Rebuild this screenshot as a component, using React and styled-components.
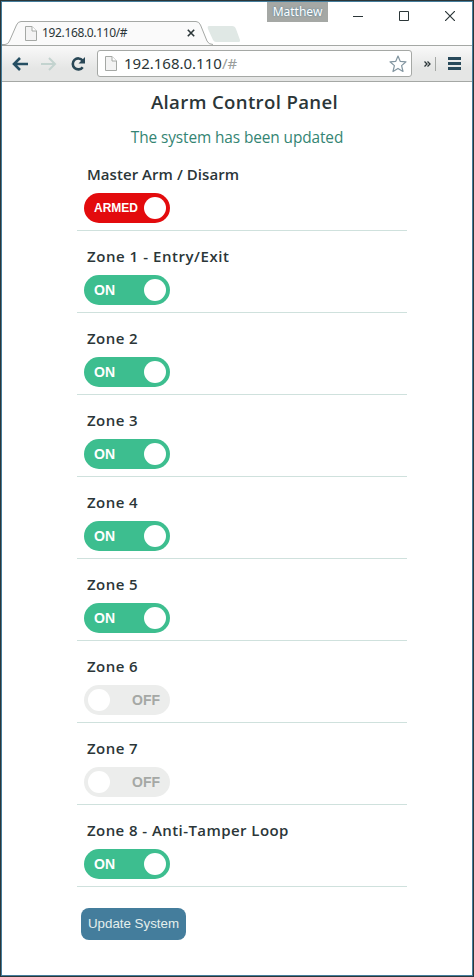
import React from "react";
import styled, { createGlobalStyle } from "styled-components";

const GlobalStyle = createGlobalStyle`
  *, *::before, *::after { box-sizing: border-box; }
  body { margin: 0; background: #fff; }
  svg { display: block; flex: none; }
`;

const BrowserWindow = styled.div`
  width: 474px;
  height: 977px;
  display: flex;
  flex-direction: column;
  overflow: hidden;
  background: #fff;
  border: 1px solid #2b3638;
  outline: 1px solid #447d9c;
  outline-offset: -2px;
  font-family: "Noto Sans", "Open Sans", sans-serif;
`;

const TitleBar = styled.header`
  height: 44px;
  flex: none;
  display: flex;
  justify-content: space-between;
`;

const TabStrip = styled.div`
  display: flex;
  align-items: flex-end;
  height: 45px;
`;

const Tab = styled.div`
  display: grid;
  width: 211px;
  height: 25px;
  margin-left: 1px;
  > * { grid-area: 1 / 1; }
`;

const TabContent = styled.div`
  z-index: 1;
  display: flex;
  align-items: center;
  height: 24px;
  padding: 0 18px 0 23px;
`;

const TabTitle = styled.span`
  flex: 1;
  margin-left: 5px;
  font-size: 12px;
  line-height: 18px;
  letter-spacing: -0.35px;
  color: #2b3638;
`;

const NewTab = styled.div`
  margin: 0 0 4px -6px;
`;

const WindowControls = styled.div`
  display: flex;
  align-items: flex-start;
`;

const UserBadge = styled.div`
  width: 61px;
  height: 20px;
  margin: 1px 25px 0 0;
  background: #a5a8a5;
  color: #fff;
  font-size: 12px;
  line-height: 20px;
  text-align: center;
  text-shadow: 0 0 2px #447d9c;
`;

const ControlIcons = styled.div`
  display: flex;
  gap: 36px;
  padding: 10px 18px 0 0;
`;

const Toolbar = styled.nav`
  height: 37px;
  flex: none;
  display: flex;
  align-items: center;
  border-top: 1px solid #a5a8a5;
  border-bottom: 1px solid #a5a8a5;
  margin: 0 1px;
  padding: 0 11px 0 10px;
  background: linear-gradient(#f9f9f9, #e5e6e5 65%);
`;

const NavIcons = styled.div`
  display: flex;
  align-items: center;
  gap: 13px;
`;

const AddressBar = styled.div`
  display: flex;
  align-items: center;
  width: 315px;
  height: 27px;
  margin-left: 11px;
  padding: 0 4px 0 7px;
  background: #fff;
  border: 1px solid #a5a8a5;
  border-radius: 3px;
`;

const Address = styled.span`
  flex: 1;
  margin: 0 0 2px 7px;
  font-size: 15px;
  line-height: 24px;
  color: #2b3638;
`;

const Fragment = styled.span`
  color: #999d9b;
`;

const ToolbarEnd = styled.div`
  display: flex;
  align-items: center;
  margin-left: auto;
`;

const Divider = styled.div`
  width: 1px;
  height: 14px;
  margin: 0 12px 0 4px;
  background: #a5a8a5;
`;

const Page = styled.main`
  flex: 1;
  display: flex;
  flex-direction: column;
  padding: 0 66px 0 76px;
  font-family: "Open Sans", sans-serif;
  color: #2b3638;
`;

const Heading = styled.h1`
  margin: 6px 0 0 5px;
  font-size: 18.6px;
  font-weight: 600;
  line-height: 28px;
  text-align: center;
  letter-spacing: 0.35px;
  white-space: nowrap;
`;

const Status = styled.p`
  margin: 10px 10px 0 0;
  font-size: 15.4px;
  line-height: 24px;
  text-align: center;
  letter-spacing: -0.1px;
  color: #348573;
  white-space: nowrap;
`;

const ZoneRow = styled.section`
  height: 82px;
  flex: none;
  display: flex;
  flex-direction: column;
  align-items: flex-start;
  padding: 14px 0 0 7px;
  border-bottom: 1px solid #cfe1dd;

  &:first-of-type {
    height: 81px;
    padding-top: 13px;
  }
`;

const ZoneName = styled.h2`
  margin: 0 0 8px 3px;
  font-size: 15px;
  font-weight: 600;
  line-height: 22px;
  letter-spacing: ${(p) => p.$spacing}px;
  white-space: nowrap;
`;

const toggleColors = { armed: "#e30b0d", on: "#3dbe8f", off: "#ecedec" };

const Toggle = styled.button`
  display: flex;
  flex-direction: ${(p) => (p.$state === "off" ? "row-reverse" : "row")};
  align-items: center;
  justify-content: space-between;
  width: 86px;
  height: 30px;
  padding: ${(p) => (p.$state === "off" ? "0 10px 0 4px" : "0 4px 0 10px")};
  border: 0;
  border-radius: 15px;
  background: ${(p) => toggleColors[p.$state]};
  color: ${(p) => (p.$state === "off" ? "#a5a8a5" : "#fff")};
  font: bold ${(p) => (p.$state === "armed" ? 12 : 14)}px/16px "Liberation Sans", Arial, sans-serif;
`;

const Knob = styled.span`
  width: 22px;
  height: 22px;
  border-radius: 50%;
  background: #fff;
`;

const UpdateButton = styled.button`
  width: 105px;
  height: 32px;
  margin: 21px 0 0 4px;
  padding: 0;
  border: 0;
  border-radius: 8px;
  background: #447d9c;
  color: #e4efed;
  font: 13.33px/18px "Liberation Sans", Arial, sans-serif;
  white-space: nowrap;
`;

const TabShape = () => (
  <svg width="211" height="25" viewBox="0 0 211 25">
    <path d="M0 23.500H3Q6 23.500 7.500 20L14.500 4Q16 .5 19 .5H194Q197 .5 198.500 4L205 20Q206.500 23.500 211 23.500V25H0Z" fill="#fafafa" />
    <path d="M0 23.500H3Q6 23.500 7.500 20L14.500 4Q16 .5 19 .5H194Q197 .5 198.500 4L205 20Q206.500 23.500 211 23.500" fill="none" stroke="#a5a8a5" />
  </svg>
);

const PageIcon = () => (
  <svg width="12" height="15" viewBox="0 0 12 15" fill="#f3f3f3" stroke="#a5a8a5">
    <path d="M.5 .5H7L11.500 5V14.500H.5Z" />
    <path d="M7 .5V5H11.500" fill="#fff" />
  </svg>
);

const CloseTabIcon = () => (
  <svg width="8" height="8" viewBox="0 0 8 8" stroke="#2b3638" strokeWidth="1.600">
    <path d="M.8 .8L7.200 7.200M7.200 .8L.8 7.200" />
  </svg>
);

const ArrowIcon = ({ forward }) => (
  <svg width="16" height="14" viewBox="0 0 16 14" fill="none" stroke={forward ? "#c3d3cf" : "#264f63"} strokeWidth={forward ? 2 : 2.600}>
    <path d={forward ? "M0 7H14M8 1L14 7L8 13" : "M16 7H2M8 1L2 7L8 13"} />
  </svg>
);

const ReloadIcon = () => (
  <svg width="16" height="14" viewBox="0 0 16 14">
    <path d="M12.600 3.500A5.500 5.500 0 1 0 12.700 10.200" fill="none" stroke="#294756" strokeWidth="2.600" />
    <path d="M15 0V6.500H8.500Z" fill="#294756" />
  </svg>
);

const StarIcon = () => (
  <svg width="18" height="18" viewBox="0 0 18 18">
    <path d="M9 1L11.200 6.300L17 6.800L12.600 10.600L14 16.500L9 13.400L4 16.500L5.400 10.600L1 6.800L6.800 6.300Z" fill="#fff" stroke="#8295a0" strokeWidth="1.200" strokeLinejoin="round" />
  </svg>
);

const OverflowIcon = () => (
  <svg width="7" height="6" viewBox="0 0 7 6" fill="none" stroke="#2b3638" strokeWidth="1.300">
    <path d="M.5 .5L3 3L.5 5.500M3.500 .5L6 3L3.500 5.500" />
  </svg>
);

const MenuIcon = () => (
  <svg width="13" height="13" viewBox="0 0 13 13" stroke="#28495a" strokeWidth="3">
    <path d="M0 1.500H13M0 6.500H13M0 11.500H13" />
  </svg>
);

const zones = [
  { name: "Master Arm / Disarm", state: "armed", spacing: 0.05 },
  { name: "Zone 1 - Entry/Exit", state: "on", spacing: 0.55 },
  { name: "Zone 2", state: "on", spacing: 0.45 },
  { name: "Zone 3", state: "on", spacing: 0.45 },
  { name: "Zone 4", state: "on", spacing: 0.45 },
  { name: "Zone 5", state: "on", spacing: 0.45 },
  { name: "Zone 6", state: "off", spacing: 0.45 },
  { name: "Zone 7", state: "off", spacing: 0.45 },
  { name: "Zone 8 - Anti-Tamper Loop", state: "on", spacing: 0.43 },
];

export default function App() {
  return (
    <BrowserWindow>
      <GlobalStyle />
      <TitleBar>
        <TabStrip>
          <Tab>
            <TabShape />
            <TabContent>
              <PageIcon />
              <TabTitle>192.168.0.110/#</TabTitle>
              <CloseTabIcon />
            </TabContent>
          </Tab>
          <NewTab>
            <svg width="34" height="16" viewBox="0 0 34 16">
              <path d="M2 0H25Q28 0 29 3L33 14Q33.500 16 31 16H9Q7 16 6 14L1 3Q0 0 2 0Z" fill="#e0e8e5" />
            </svg>
          </NewTab>
        </TabStrip>
        <WindowControls>
          <UserBadge>Matthew</UserBadge>
          <ControlIcons>
            <svg width="10" height="10" viewBox="0 0 10 10"><path d="M0 5.500H10" stroke="#2b3638" /></svg>
            <svg width="10" height="10" viewBox="0 0 10 10"><path d="M.5 .5H9.500V9.500H.5Z" fill="none" stroke="#2b3638" /></svg>
            <svg width="10" height="10" viewBox="0 0 10 10"><path d="M0 0L10 10M10 0L0 10" stroke="#2b3638" strokeWidth="1.200" /></svg>
          </ControlIcons>
        </WindowControls>
      </TitleBar>
      <Toolbar>
        <NavIcons>
          <ArrowIcon />
          <ArrowIcon forward />
          <ReloadIcon />
        </NavIcons>
        <AddressBar>
          <PageIcon />
          <Address>192.168.0.110<Fragment>/#</Fragment></Address>
          <StarIcon />
        </AddressBar>
        <ToolbarEnd>
          <OverflowIcon />
          <Divider />
          <MenuIcon />
        </ToolbarEnd>
      </Toolbar>
      <Page>
        <Heading>Alarm Control Panel</Heading>
        <Status>The system has been updated</Status>
        {zones.map(({ name, state, spacing }) => (
          <ZoneRow key={name}>
            <ZoneName $spacing={spacing}>{name}</ZoneName>
            <Toggle $state={state}>
              <span>{state.toUpperCase()}</span>
              <Knob />
            </Toggle>
          </ZoneRow>
        ))}
        <UpdateButton>Update System</UpdateButton>
      </Page>
    </BrowserWindow>
  );
}
